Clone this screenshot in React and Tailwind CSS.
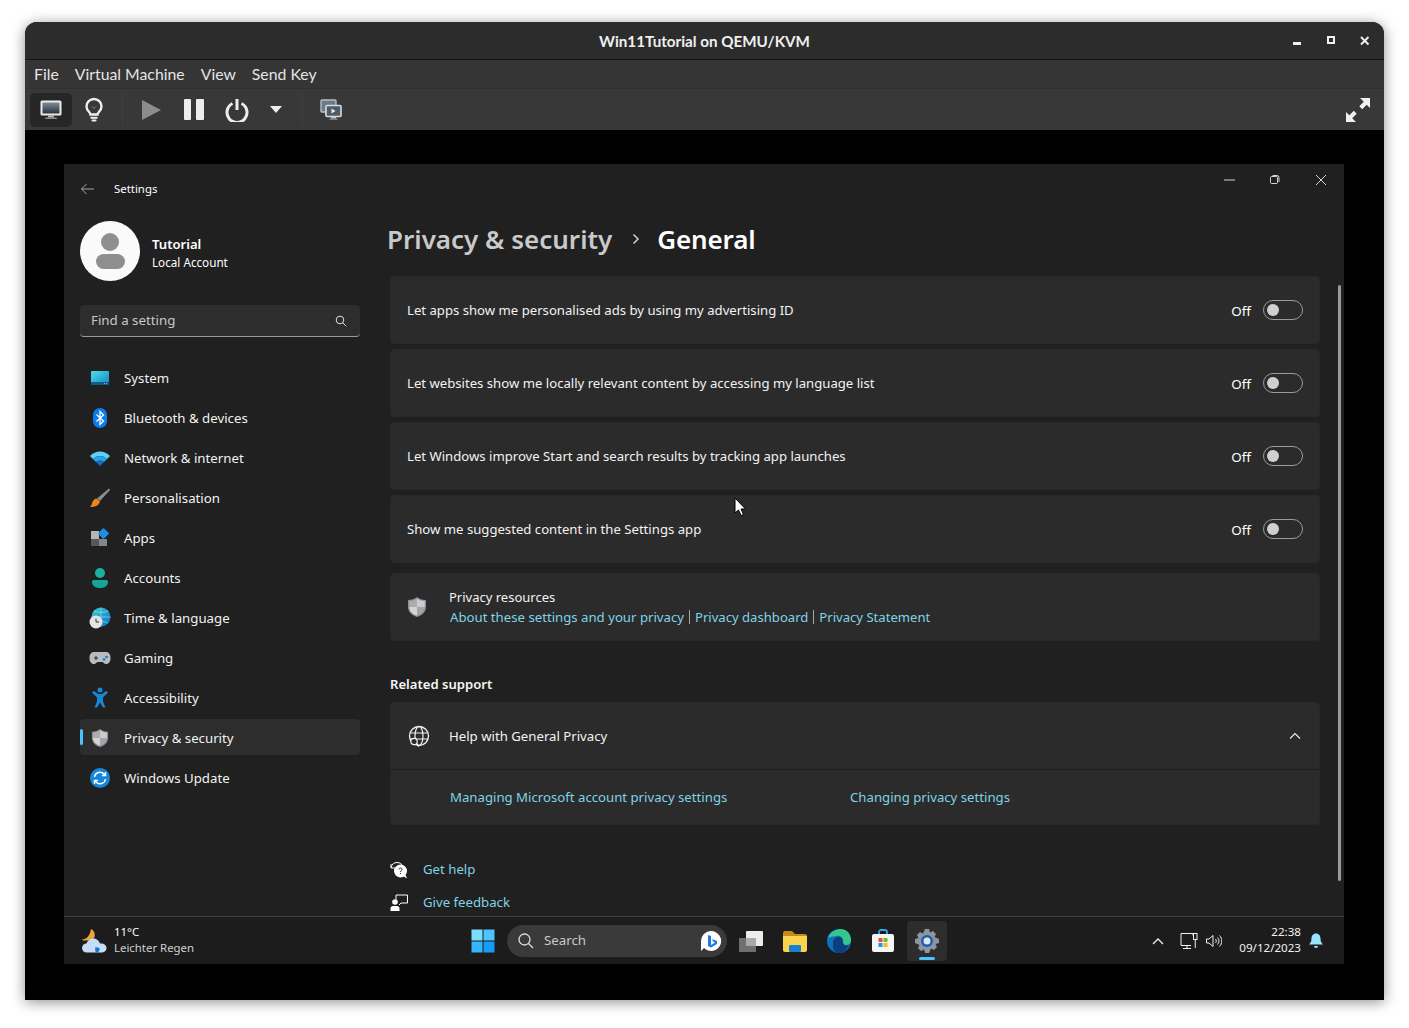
const font = { segoe: "font-['Noto_Sans',sans-serif]" };

const Svg = ({ w = 24, h = 24, vb, children, className = "" }) => (
  <svg width={w} height={h} viewBox={vb || `0 0 ${w} ${h}`} fill="none" className={`shrink-0 ${className}`}>
    {children}
  </svg>
);

// ---- host window icons
const MonitorIcon = () => (
  <Svg w={24} h={22}>
    <rect x="1.500" y="1.500" width="21" height="15" rx="1.500" fill="#ececec" />
    <rect x="3.500" y="3.500" width="17" height="11" fill="url(#mon)" />
    <rect x="9" y="16.500" width="6" height="2" fill="#bbb" />
    <rect x="6" y="18.500" width="12" height="1.500" rx=".7" fill="#8c8c8c" />
    <defs>
      <linearGradient id="mon" x1="0" y1="0" x2="0" y2="1">
        <stop stopColor="#7d8a96" />
        <stop offset="1" stopColor="#2c3540" />
      </linearGradient>
    </defs>
  </Svg>
);
const BulbIcon = () => (
  <Svg w={20} h={26}>
    <path d="M6.500 17.500c0-2.500-4-3.500-4-8a7.500 7.500 0 0 1 15 0c0 4.500-4 5.500-4 8z" stroke="#eee" strokeWidth="2.400" />
    <path d="M8 9.500l2 2 2-2" stroke="#888" strokeWidth="1" />
    <rect x="6.500" y="19.800" width="7" height="2" fill="#eee" />
    <rect x="7.500" y="22.500" width="5" height="2" rx="1" fill="#eee" />
  </Svg>
);
const ScreensIcon = () => (
  <Svg w={24} h={24}>
    <rect x="2" y="2" width="15" height="12" rx="1" fill="#6a7a88" stroke="#b9bdc2" strokeWidth="1.400" />
    <rect x="6" y="15" width="6" height="1.500" fill="#999" />
    <rect x="7" y="7.500" width="15" height="11" rx="1" fill="#4d5c69" stroke="#d9dbde" strokeWidth="1.600" />
    <path d="M12.500 10.500l4 2.500-4 2.500z" fill="#efefef" />
    <rect x="12" y="19" width="5" height="1.500" fill="#c4c4c4" />
    <rect x="10.500" y="20.500" width="8" height="1.300" fill="#8f8f8f" />
  </Svg>
);

// ---- sidebar icons
const SystemIcon = () => (
  <Svg w={20} h={16}>
    <rect x="1" y="1" width="18" height="14" rx="1" fill="url(#sys)" />
    <rect x="1" y="12" width="18" height="3" fill="#0f5c86" />
    <rect x="14" y="13" width="1" height="1" fill="#9ad" />
    <rect x="16" y="13" width="1" height="1" fill="#9ad" />
    <defs>
      <linearGradient id="sys" x1="0" y1="0" x2="1" y2="1">
        <stop stopColor="#4de0ea" />
        <stop offset="1" stopColor="#1284c8" />
      </linearGradient>
    </defs>
  </Svg>
);
const BluetoothIcon = () => (
  <Svg w={16} h={22}>
    <rect x="1" y="1" width="14" height="20" rx="7" fill="#0a7df0" />
    <path d="M4.500 7.500l7 6.500-3.500 3.500v-13l3.500 3.500-7 6.500" stroke="#fff" strokeWidth="1.300" />
  </Svg>
);
const WifiIcon = () => (
  <Svg w={22} h={16}>
    <path d="M1 6c5.500-6 14.500-6 20 0l-3 3c-4-4-10-4-14 0z" fill="#5fd0f7" />
    <path d="M4 9c4-4 10-4 14 0l-3 3c-2.500-2-5.500-2-8 0z" fill="#27a5ec" />
    <path d="M7 12c2.500-2 5.500-2 8 0l-4 4z" fill="#0e6fc4" />
  </Svg>
);
const BrushIcon = () => (
  <Svg w={22} h={22}>
    <path d="M20 1.500c1 .5 1 1 .5 2L11 14l-3-2.500z" fill="#8e8e8e" />
    <path d="M7.500 11.500l3.500 3-1.500 3c-2 2-6 2.500-8.500 2.500 1.500-1 1.500-3 2.500-5 1-2 2.500-3.500 4-3.500z" fill="#f0851e" />
  </Svg>
);
const AppsIcon = () => (
  <Svg w={20} h={20}>
    <rect x="1" y="3" width="8" height="8" fill="#b4b6ba" />
    <rect x="1" y="11" width="8" height="7" fill="#55575b" />
    <rect x="9" y="11" width="8" height="7" fill="#85878c" />
    <rect x="9.500" y="1.500" width="8" height="8" rx="1" transform="rotate(45 13.500 5.500)" fill="#1b8fe8" />
  </Svg>
);
const AccountsIcon = () => (
  <Svg w={18} h={22}>
    <circle cx="9" cy="6" r="5" fill="#1bb09f" />
    <path d="M1 15c0-1.500 1-2 2.500-2h11c1.500 0 2.500.5 2.500 2 0 4-4 6-8 6s-8-2-8-6z" fill="#17a696" />
  </Svg>
);
const TimeIcon = () => (
  <Svg w={22} h={22}>
    <circle cx="12" cy="10" r="9.500" fill="url(#tm)" />
    <path d="M12 .5v19M2.500 10h19M5 4c4 2 10 2 14 0M5 16c4-2 10-2 14 0" stroke="#9fe6f2" strokeWidth=".6" />
    <circle cx="7" cy="15" r="6.500" fill="#e4e4e4" />
    <path d="M7 11.500V15h3" stroke="#333" strokeWidth="1" />
    <defs>
      <linearGradient id="tm" x1="0" y1="0" x2="1" y2="1">
        <stop stopColor="#3bd0d8" />
        <stop offset="1" stopColor="#0b6fc2" />
      </linearGradient>
    </defs>
  </Svg>
);
const GamingIcon = () => (
  <Svg w={22} h={14}>
    <path d="M5 1h12c3 0 4.500 2.500 4.500 6s-1.500 6-4.500 6c-2 0-2.500-2-4-2H9c-1.500 0-2 2-4 2-3 0-4.500-2.500-4.500-6S2 1 5 1z" fill="#b8bbc0" />
    <path d="M5 7h4M7 5v4" stroke="#333" strokeWidth="1.100" />
    <circle cx="15" cy="8.500" r="1.300" fill="#1b78c8" />
    <circle cx="17.500" cy="6" r="1.300" fill="#1b78c8" />
  </Svg>
);
const AccessIcon = () => (
  <Svg w={18} h={22}>
    <circle cx="9" cy="3" r="2.500" fill="#1787d8" />
    <path d="M1 5.500l2-1.500 4 3h4l4-3 2 1.500-5 5v4l2.500 6h-2.500l-3-5-3 5H3.500L6 14.500v-4z" fill="#1787d8" />
  </Svg>
);
const ShieldIcon = ({ size = 20 }) => (
  <Svg w={size} h={size + 2} vb="0 0 20 22">
    <path d="M10 1c2.500 1.800 5 3 9 3v7c0 5-4 8.500-9 10-5-1.500-9-5-9-10V4c4 0 6.500-1.200 9-3z" fill="#8b8f94" />
    <path d="M10 2.500v8.500H2.200V5c3.500-.2 5.500-1.200 7.800-2.500z" fill="#a9adb1" />
    <path d="M10 2.500c2.300 1.300 4.300 2.300 7.800 2.500v6H10z" fill="#c9cccf" />
    <path d="M2.200 11H10v8.700c-4-1.300-7.800-4.500-7.800-8.700z" fill="#d2d4d6" />
    <path d="M10 11h7.800c0 4.200-3.800 7.400-7.800 8.700z" fill="#a2a6aa" />
  </Svg>
);
const NavShield = () => <ShieldIcon size={18} />;
const UpdateIcon = () => (
  <Svg w={20} h={20}>
    <circle cx="10" cy="10" r="10" fill="#1588dc" />
    <path d="M4.500 9a5.500 5.500 0 0 1 9.500-3l1 1M15.500 11a5.500 5.500 0 0 1-9.500 3l-1-1" stroke="#fff" strokeWidth="1.400" />
    <path d="M15.500 4v3.500H12M4.500 16v-3.500H8" stroke="#fff" strokeWidth="1.400" />
  </Svg>
);

// ---- taskbar icons
const WeatherIcon = () => (
  <Svg w={26} h={26}>
    <path d="M10 1c2.500 1 4.500 4 3.500 8-1 2.500-3 3.500-5.500 3.500H3C2 12.500 1 12 1 11.500c4.500 0 8-4 9-10.500z" fill="#f2a23a" />
    <path d="M5.500 24.500C3 24.500 1 22.500 1 20s2-4.500 4.500-4.500C6.500 12.500 9 10.500 12.500 10.500c3 0 5.500 2 6.500 5 3.500-.5 6.500 1.500 6.500 4.500s-2.500 4.500-5 4.500z" fill="#c6ddf5" />
    <path d="M15 24.500c2.500 0 4-2 3.500-4.500l-4-1c-.5 2-.5 4 .5 5.500z" fill="#1676d8" />
  </Svg>
);
const StartIcon = () => (
  <Svg w={24} h={24}>
    <rect x="0.500" y="0.500" width="11" height="11" fill="#7cdcfd" />
    <rect x="12.500" y="0.500" width="11" height="11" fill="#4dc4fb" />
    <rect x="0.500" y="12.500" width="11" height="11" fill="#35b5fa" />
    <rect x="12.500" y="12.500" width="11" height="11" fill="#149cf6" />
  </Svg>
);
const BingIcon = () => (
  <Svg w={22} h={22}>
    <path d="M11 1a10 10 0 1 1-7 17l-3 3c0-3 0-6 0-10A10 10 0 0 1 11 1z" fill="#fff" />
    <path d="M8 5l3 1v9l4-2.500-2-1-1-2.500 5 2v3l-6 3.500-3-1.500z" fill="#1a7be0" />
  </Svg>
);
const TaskViewIcon = () => (
  <Svg w={26} h={24}>
    <rect x="1" y="9" width="17" height="14" rx="1" fill="#6f6f6f" />
    <rect x="8" y="2" width="17" height="15" rx="1" fill="#ececec" />
    <rect x="8" y="9" width="10" height="8" fill="#a9a9a9" />
  </Svg>
);
const FilesIcon = () => (
  <Svg w={24} h={22}>
    <path d="M0 3a2 2 0 0 1 2-2h7l3 3h10a2 2 0 0 1 2 2v2H0z" fill="#c98a15" />
    <path d="M0 6h24v14a2 2 0 0 1-2 2H2a2 2 0 0 1-2-2z" fill="#fcd34f" />
    <rect x="6" y="15" width="12" height="7" rx="1" fill="#1a7fcf" />
  </Svg>
);
const EdgeIcon = () => (
  <Svg w={24} h={24}>
    <circle cx="12" cy="12" r="12" fill="#0f6fbf" />
    <path d="M1 9C3 2 10 0 14 0c6 0 10 5 10 11 0 3-2 5-5 5-2 0-4-1-3-3 1-4-3-7-7-6-3 .5-6 1-8 2z" fill="#35c68d" />
    <path d="M6 13c0-3 3-5 6-5s4 3 4 5c0 3 3 4 6 3-2 5-6 8-10 8-2 0-5-1-6-5z" fill="#0b3f7e" />
  </Svg>
);
const StoreIcon = () => (
  <Svg w={24} h={24}>
    <path d="M8 6V3a2 2 0 0 1 2-2h4a2 2 0 0 1 2 2v3" stroke="#29a7e8" strokeWidth="1.800" />
    <rect x="1" y="5" width="22" height="18" rx="2" fill="#f5f5f5" />
    <rect x="7.500" y="9" width="4" height="4" fill="#e8512c" />
    <rect x="12.500" y="9" width="4" height="4" fill="#6cbc2d" />
    <rect x="7.500" y="14" width="4" height="4" fill="#0f9be8" />
    <rect x="12.500" y="14" width="4" height="4" fill="#fbbc09" />
  </Svg>
);
const GearIcon = () => (
  <Svg w={24} h={24}>
    <path d="M10 0h4l1 3.500 3-1.500 3 3-1.500 3L24 10v4l-3.500 1 1.500 3-3 3-3-1.500L14 24h-4l-1-3.500L6 22l-3-3 1.500-3L0 14v-4l3.500-1L2 6l3-3 3 1.500z" fill="#8b96a1" />
    <circle cx="12" cy="12" r="6" fill="#1a5fae" />
    <circle cx="12" cy="12" r="3.500" fill="#dfe5ea" />
  </Svg>
);

const navItems = [
  ["System", SystemIcon],
  ["Bluetooth & devices", BluetoothIcon],
  ["Network & internet", WifiIcon],
  ["Personalisation", BrushIcon],
  ["Apps", AppsIcon],
  ["Accounts", AccountsIcon],
  ["Time & language", TimeIcon],
  ["Gaming", GamingIcon],
  ["Accessibility", AccessIcon],
  ["Privacy & security", NavShield],
  ["Windows Update", UpdateIcon],
];

const toggles = [
  "Let apps show me personalised ads by using my advertising ID",
  "Let websites show me locally relevant content by accessing my language list",
  "Let Windows improve Start and search results by tracking app launches",
  "Show me suggested content in the Settings app",
];

function Sidebar() {
  return (
    <div className="w-[326px] shrink-0 pl-4 flex flex-col">
      <div className="h-[57px] shrink-0 flex items-center pb-[8px]">
        <svg width="16" height="16" viewBox="0 0 16 16" fill="none">
          <path d="M14 8H1.500M6.500 3l-5 5 5 5" stroke="#a5a5a5" strokeWidth="1" />
        </svg>
        <span className="ml-[18px] text-[11.400px] text-white">Settings</span>
      </div>
      <div className="flex items-center h-[60px] shrink-0">
        <div className="w-[60px] h-[60px] rounded-full bg-[#fafafa] flex flex-col items-center justify-center gap-[3px]">
          <div className="w-[18px] h-[18px] rounded-full bg-[#8f8f8f]" />
          <div className="w-[29px] h-[15px] rounded-[8px] bg-[#8f8f8f]" />
        </div>
        <div className="ml-3 flex flex-col pt-[3px]">
          <span className="text-[13.100px] leading-[18px] font-semibold text-white">Tutorial</span>
          <span className="text-[11.700px] leading-[18px] text-white">Local Account</span>
        </div>
      </div>
      <div className="mt-6 w-[280px] h-8 shrink-0 rounded-[4px] bg-[#2d2d2d] border-b border-b-[#9a9a9a] flex items-center px-[11px]">
        <span className="text-[13.300px] text-[#c8c8c8] pt-px">Find a setting</span>
        <svg width="12" height="12" viewBox="0 0 12 12" fill="none" className="ml-auto mr-[2px]">
          <circle cx="5" cy="5" r="3.800" stroke="#e0e0e0" />
          <path d="M7.800 7.800l3.500 3.500" stroke="#e0e0e0" />
        </svg>
      </div>
      <div className="mt-[22px] flex flex-col gap-1 w-[280px]">
        {navItems.map(([label, Icon]) => {
          const active = label === "Privacy & security";
          return (
            <div key={label} className={`h-9 shrink-0 rounded-[4px] flex items-center relative ${active ? "bg-[#2d2d2d]" : ""}`}>
              {active && <div className="absolute left-0 top-[10px] w-[3px] h-4 rounded-full bg-[#4cc2ff]" />}
              <div className="w-10 flex justify-center pt-px"><Icon /></div>
              <span className="ml-1 text-[13.250px] text-[#f2f2f2] pt-[3px]">{label}</span>
            </div>
          );
        })}
      </div>
    </div>
  );
}

function ToggleRow({ label }) {
  return (
    <div className="h-[68px] shrink-0 rounded-[4px] bg-[#2b2b2b] border border-[#282828] flex items-center pl-4 pr-4">
      <span className="text-[13.150px] text-[#f2f2f2] pt-[2px]">{label}</span>
      <span className="ml-auto text-[13.400px] text-white pt-[2px]">Off</span>
      <div className="ml-3 w-10 h-5 rounded-full border border-[#9b9b9b] flex items-center pl-[3px]">
        <div className="w-3 h-3 rounded-full bg-[#cfcfcf]" />
      </div>
    </div>
  );
}

const Link = ({ children }) => <span className="text-[#7fd3e6]">{children}</span>;

function Main() {
  return (
    <div className="flex-1 flex flex-col min-w-0 pr-[24px] relative">
      <div className="h-[112px] shrink-0 flex flex-col">
        <div className="h-[46px] flex justify-end -mr-[24px]">
          {/* window controls */}
          <div className="flex items-start pt-[10px]">
            <svg width="46" height="12" viewBox="0 0 46 12" fill="none"><path d="M18 6h11" stroke="#d5d5d5" /></svg>
            <svg width="46" height="12" viewBox="0 0 46 12" fill="none">
              <rect x="18.500" y="2.500" width="7" height="7" rx="1" stroke="#d5d5d5" />
              <path d="M20.500 1.500h4.500a2 2 0 0 1 2 2V8" stroke="#d5d5d5" />
            </svg>
            <svg width="46" height="12" viewBox="0 0 46 12" fill="none"><path d="M18 1l10 10M28 1L18 11" stroke="#d5d5d5" /></svg>
          </div>
        </div>
        <div className="flex items-center h-[58px] -ml-[3px]">
          <span className="text-[26px] font-semibold text-[#c9c9c9]">Privacy &amp; security</span>
          <svg width="10" height="14" viewBox="0 0 10 14" fill="none" className="ml-[19px]"><path d="M2.500 2.500L7 7l-4.500 4.500" stroke="#c9c9c9" strokeWidth="1.600" /></svg>
          <span className="ml-[16px] text-[26px] font-semibold text-white tracking-[-0.15px]">General</span>
        </div>
      </div>
      <div className="flex flex-col gap-[5px] shrink-0">
        {toggles.map((t) => <ToggleRow key={t} label={t} />)}
      </div>
      <div className="mt-[10px] h-[68px] shrink-0 rounded-[4px] bg-[#2b2b2b] border border-[#282828] flex items-center pl-4">
        <ShieldIcon />
        <div className="ml-[22px] flex flex-col text-[13.100px]">
          <span className="text-[#f2f2f2] leading-[20px] text-[13px]">Privacy resources</span>
          <div className="leading-[20px] flex items-center">
            <span className="ml-px text-[13.200px]"><Link>About these settings and your privacy</Link></span>
            <span className="mx-[5px] w-px h-[14px] bg-[#a5a5a5]" />
            <Link>Privacy dashboard</Link>
            <span className="mx-[5px] w-px h-[14px] bg-[#a5a5a5]" />
            <Link>Privacy Statement</Link>
          </div>
        </div>
      </div>
      <div className="mt-[33px] shrink-0 text-[13.100px] font-semibold text-[#f5f5f5] leading-[20px]">Related support</div>
      <div className="mt-[8px] shrink-0 rounded-[4px] bg-[#2b2b2b] border border-[#282828] flex flex-col h-[123px]">
        <div className="h-[67px] shrink-0 flex items-center pl-[17px] pr-[17px] border-b border-b-[#1d1d1d]">
          <svg width="22" height="22" viewBox="0 0 22 22" fill="none">
            <circle cx="11" cy="11" r="9.500" stroke="#f2f2f2" strokeWidth="1.300" />
            <ellipse cx="11" cy="11" rx="4" ry="9.500" stroke="#f2f2f2" strokeWidth="1.200" />
            <path d="M2 8h18M2 14h18" stroke="#f2f2f2" strokeWidth="1.200" />
            <circle cx="6" cy="16.500" r="3.200" fill="#2b2b2b" stroke="#f2f2f2" strokeWidth="1.200" />
            <path d="M8.500 19l2.500 2.500" stroke="#f2f2f2" strokeWidth="1.200" />
          </svg>
          <span className="ml-[19px] text-[13.200px] text-[#f2f2f2] pt-[2px]">Help with General Privacy</span>
          <svg width="12" height="8" viewBox="0 0 12 8" fill="none" className="ml-auto mr-px"><path d="M1 6.500l5-5 5 5" stroke="#eee" strokeWidth="1.100" /></svg>
        </div>
        <div className="flex-1 flex items-center text-[13.200px] pl-[59px] pt-[2px]">
          <span className="w-[400px]"><Link>Managing Microsoft account privacy settings</Link></span>
          <Link>Changing privacy settings</Link>
        </div>
      </div>
      <div className="mt-[28px] shrink-0 flex items-center h-[33px] text-[13.200px]">
        <svg width="18" height="18" viewBox="0 0 18 18" fill="none">
          <path d="M1 6.500C2 3 4 1.500 7 1.500S12 3 12.500 5" stroke="#fff" />
          <circle cx="10.500" cy="10" r="6.500" fill="#fff" />
          <path d="M13 15l4 2.500-1.500-4z" fill="#fff" />
          <path d="M1 3v4h4" stroke="#fff" />
          <path d="M9 8.500c0-2 3-2 3 0 0 1-1.500 1-1.500 2.500M10.500 12v1" stroke="#202020" />
        </svg>
        <span className="ml-[15px]"><Link>Get help</Link></span>
      </div>
      <div className="shrink-0 flex items-center h-[33px] text-[13.200px]">
        <svg width="18" height="18" viewBox="0 0 18 18" fill="none">
          <circle cx="5" cy="8" r="2.800" fill="#fff" />
          <path d="M0.500 17v-2.500c0-1.500 1-2.500 2.500-2.500h4c1.500 0 2.500 1 2.500 2.500V17z" fill="#fff" />
          <path d="M6 5.500V1h11.500v8H11L9 11" stroke="#fff" />
        </svg>
        <span className="ml-[15px]"><Link>Give feedback</Link></span>
      </div>
      {/* scrollbar */}
      <div className="absolute right-[3px] top-[121px] w-[3px] h-[596px] rounded-full bg-[#9a9a9a]" />
    </div>
  );
}

function Taskbar() {
  return (
    <div className="h-[48px] bg-[#1c1c1c] border-t border-t-[#414141] flex items-center">
      <div className="w-[407px] shrink-0 pl-[17px] flex items-center">
        <WeatherIcon />
        <div className="ml-[7px] -mt-[2px] flex flex-col text-[11.400px] leading-[16px]">
          <span className="text-white">11°C</span>
          <span className="text-[#cfcfcf]">Leichter Regen</span>
        </div>
      </div>
      <StartIcon />
      <div className="ml-3 w-[220px] h-8 rounded-full bg-[#3a3a3a] flex items-center pl-[11px] pr-[5px]">
        <svg width="16" height="16" viewBox="0 0 16 16" fill="none">
          <circle cx="6.500" cy="6.500" r="5.500" stroke="#dedede" strokeWidth="1.300" />
          <path d="M10.500 10.500l4.500 4.500" stroke="#dedede" strokeWidth="1.300" />
        </svg>
        <span className="ml-[10px] text-[13.300px] text-[#c9c9c9]">Search</span>
        <div className="ml-auto"><BingIcon /></div>
      </div>
      <div className="ml-[11px] flex items-center">
        <div className="w-[26px] flex justify-center"><TaskViewIcon /></div>
        <div className="ml-[19px]"><FilesIcon /></div>
        <div className="ml-[20px]"><EdgeIcon /></div>
        <div className="ml-[20px]"><StoreIcon /></div>
        <div className="ml-[12px] w-10 h-10 rounded-[4px] bg-[#2d2d2d] flex items-center justify-center relative">
          <GearIcon />
          <div className="absolute bottom-[1px] left-3 w-4 h-[3px] rounded-full bg-[#4cc2ff]" />
        </div>
      </div>
      <div className="ml-auto flex items-center pr-[20px]">
        <svg width="12" height="8" viewBox="0 0 12 8" fill="none"><path d="M1 7l5-5 5 5" stroke="#eee" strokeWidth="1.300" /></svg>
        <svg width="18" height="18" viewBox="0 0 18 18" fill="none" className="ml-[16px]">
          <path d="M11 13.500H1V1.500h12v2" stroke="#f0f0f0" />
          <path d="M7 13.500v2.500M3 16.500h8" stroke="#f0f0f0" />
          <rect x="13.500" y="1.500" width="3.500" height="6" stroke="#f0f0f0" />
          <path d="M15.250 8v8" stroke="#f0f0f0" />
        </svg>
        <svg width="16" height="14" viewBox="0 0 16 14" fill="none" className="ml-[8px]">
          <path d="M0.500 5h2.500l4-3.500v11L3 9H0.500z" stroke="#eee" />
          <path d="M9.500 5c1 1 1 3 0 4M11.500 3.500c2 2 2 5 0 7M13.500 1.500c3 3 3 8 0 11" stroke="#eee" />
        </svg>
        <div className="ml-[17px] -mt-[2px] flex flex-col items-end text-[11.600px] leading-[16px] text-[#f2f2f2]">
          <span>22:38</span>
          <span>09/12/2023</span>
        </div>
        <svg width="16" height="16" viewBox="0 0 16 16" className="ml-[7px]">
          <path d="M8 0.500c3 0 4.500 2.500 4.500 5 0 3 1 4.500 2.500 6H1c1.500-1.500 2.500-3 2.500-6 0-2.500 1.500-5 4.500-5z" fill="#98e4fb" />
          <path d="M6 13h4a2 2 0 0 1-4 0z" fill="#98e4fb" />
        </svg>
      </div>
    </div>
  );
}

export default function App() {
  return (
    <div className="w-[1409px] h-[1028px] bg-white pt-[22px] pl-[25px] overflow-hidden">
      <div className="w-[1359px] h-[978px] rounded-t-[12px] overflow-hidden bg-black flex flex-col shadow-[0_2px_14px_rgba(0,0,0,0.45)] relative font-['Lato',sans-serif]">
        <div className="h-[38px] shrink-0 bg-[#2c2c2c] border-b border-b-[#161616] flex items-center relative text-white">
          <span className="flex-1 text-center text-[15.200px] font-bold pt-[1px] text-[#f0f0f0]">Win11Tutorial on QEMU/KVM</span>
          <div className="absolute right-[13px] top-[15px] flex items-start gap-[22px]">
            <svg width="12" height="12" viewBox="0 0 12 12"><rect x="2" y="5" width="8" height="3" fill="#f0f0f0" /></svg>
            <svg width="12" height="12" viewBox="0 0 12 12" fill="none" className="-mt-[1px]"><rect x="3" y="1" width="6" height="6" stroke="#f0f0f0" strokeWidth="2" /></svg>
            <svg width="12" height="12" viewBox="0 0 12 12" fill="none" className="-mt-[1px]"><path d="M2 1l7.500 7.500M9.500 1L2 8.500" stroke="#f0f0f0" strokeWidth="1.900" /></svg>
          </div>
        </div>
        <div className="h-[28px] shrink-0 bg-[#353535] flex items-center pl-[9px] gap-[16px] text-[15.800px] text-[#e4e4e4]">
          <span>File</span>
          <span>Virtual Machine</span>
          <span>View</span>
          <span>Send Key</span>
        </div>
        <div className="h-[42px] shrink-0 bg-[#383838] border-t border-t-[#303030] flex items-center pl-[5px]">
          <div className="w-[42px] h-[34px] rounded-[5px] bg-[#262626] flex items-center justify-center"><MonitorIcon /></div>
          <div className="ml-[12px]"><BulbIcon /></div>
          <div className="ml-[18px] w-px h-[34px] bg-[#3e3e3e]" />
          <svg width="20" height="22" viewBox="0 0 20 22" className="ml-[18px]"><path d="M1 1l19 10L1 21z" fill="#8c8c8c" /></svg>
          <div className="ml-[23px] flex gap-[5px]">
            <div className="w-[7px] h-[21px] rounded-[1px] bg-[#ededed]" />
            <div className="w-[8px] h-[21px] rounded-[1px] bg-[#ededed]" />
          </div>
          <svg width="24" height="24" viewBox="0 0 24 24" fill="none" className="ml-[21px]">
            <path d="M7.500 5.500a10 10 0 1 0 9 0" stroke="#ededed" strokeWidth="3" />
            <path d="M12 1v11" stroke="#ededed" strokeWidth="3" />
          </svg>
          <svg width="12" height="7" viewBox="0 0 12 7" className="ml-[21px]"><path d="M0 0h12L6 7z" fill="#ededed" /></svg>
          <div className="ml-[20px] w-px h-[34px] bg-[#3e3e3e]" />
          <div className="ml-[16px]"><ScreensIcon /></div>
          <svg width="26" height="26" viewBox="0 0 26 26" fill="none" className="ml-auto mr-[13px]">
            <path d="M15 1h10v10l-3.300-3.300-4.500 4.500-2.900-2.900 4.500-4.500zM11 25H1V15l3.300 3.300 4.500-4.500 2.900 2.900-4.500 4.500z" fill="#f0f0f0" />
          </svg>
        </div>
        <div className="flex-1 flex items-start pt-[34px] pl-[39px]">
          <div className={`w-[1280px] h-[800px] flex flex-col ${font.segoe}`}>
            <div className="h-[752px] shrink-0 bg-[#202020] flex overflow-hidden">
              <Sidebar />
              <Main />
            </div>
            <Taskbar />
          </div>
        </div>
        {/* mouse pointer */}
        <svg width="14" height="20" viewBox="0 0 14 20" className="absolute left-[709px] top-[475px]">
          <path d="M1 1v15l3.500-3 2.500 5.500 2.500-1-2.500-5.500h4.500z" fill="#fff" stroke="#000" />
        </svg>
      </div>
    </div>
  );
}
